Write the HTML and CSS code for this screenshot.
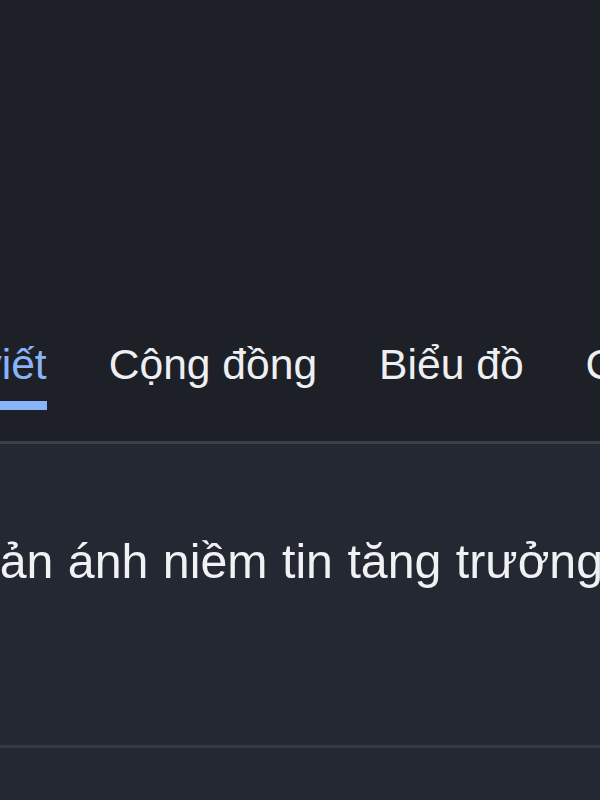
FILE: index.html
```html
<!DOCTYPE html>
<html lang="vi">

<head>
    <meta charset="UTF-8">
    <meta name="viewport" content="width=device-width, initial-scale=1.0">
    <title>Bài viết</title>
    <link rel="stylesheet" href="styles.css">
</head>

<body>
    <header class="top"></header>

    <nav class="tabs">
        <div class="tab-row">
            <a href="#" class="tab active">Bài viết</a>
            <a href="#" class="tab">Cộng đồng</a>
            <a href="#" class="tab">Biểu đồ</a>
            <a href="#" class="tab">Chỉ số</a>
        </div>
    </nav>

    <main>
        <div class="post">
            <p class="post-title">phản ánh niềm tin tăng trưởng kinh tế</p>
        </div>
        <div class="post"></div>
    </main>
</body>

</html>
```

FILE: styles.css
```css
body {
    font-family: "Liberation Sans", Arial, sans-serif;
    background-color: #242832;
    margin: 0;
    padding: 0;
    overflow: hidden;
}

.top {
    height: 300px;
    background-color: #1e2028;
}

.tabs {
    background-color: #1e2028;
    padding: 40px 0 31px;
    border-bottom: 3px solid #3b3f48;
    overflow: hidden;
}

.tab-row {
    display: flex;
    gap: 62px;
    margin-left: -93px;
    white-space: nowrap;
}

.tab {
    font-size: 42.6px;
    line-height: 48px;
    color: #eeeff1;
    text-decoration: none;
    padding-bottom: 13px;
    border-bottom: 9px solid transparent;
}

.tab.active {
    color: #8ab4f8;
    border-bottom-color: #8ab4f8;
}

.post {
    padding: 89px 0 156px;
    border-bottom: 3px solid #353943;
    overflow: hidden;
}

.post-title {
    margin: 0 0 0 -54px;
    font-size: 48.3px;
    line-height: 56px;
    color: #f0f1f3;
    white-space: nowrap;
    word-spacing: 1px;
}
```
